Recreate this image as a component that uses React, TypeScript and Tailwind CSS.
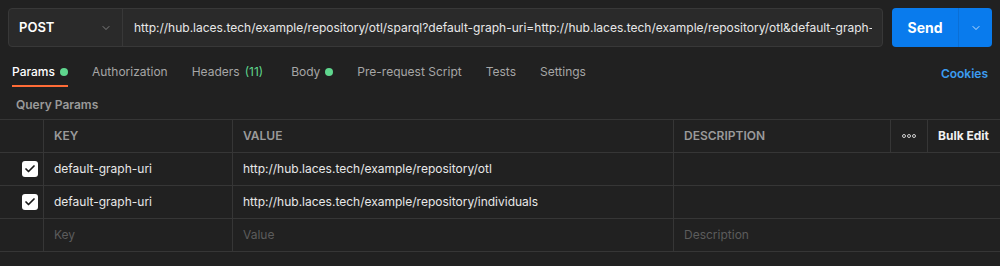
import { Check, ChevronDown } from "lucide-react";

const URL =
  "http://hub.laces.tech/example/repository/otl/sparql?default-graph-uri=http://hub.laces.tech/example/repository/otl&default-graph-uri=http://hub.laces.tech/example/repository/individuals";

const TABS = [
  { label: "Params", dot: true, active: true },
  { label: "Authorization" },
  { label: "Headers", count: "(11)" },
  { label: "Body", dot: true },
  { label: "Pre-request Script" },
  { label: "Tests" },
  { label: "Settings" },
];

const ROWS = [
  { key: "default-graph-uri", value: "http://hub.laces.tech/example/repository/otl" },
  { key: "default-graph-uri", value: "http://hub.laces.tech/example/repository/individuals" },
];

const cell = "h-[33px] border-b border-r border-[#363636] flex items-center";

export default function App() {
  return (
    <div
      className="w-[1000px] h-[266px] bg-[#212121] text-[#e8e8e8] overflow-hidden"
      style={{ fontFamily: "Inter, 'Noto Sans', sans-serif" }}
    >
      {/* request bar */}
      <div className="flex items-center px-2 pt-2">
        <div className="flex h-[39px] w-[875px] rounded-[4px] border border-[#383838] bg-[#2a2a2a]">
          <div className="flex w-[114px] items-center justify-between border-r border-[#383838] pl-[10px] pr-[10px]">
            <span className="text-[13px] font-semibold text-white">POST</span>
            <ChevronDown className="h-[12px] w-[12px] text-[#9a9a9a]" strokeWidth={1.5} />
          </div>
          <div className="flex min-w-0 flex-1 items-center pl-[11px] pr-[10px]">
            <span className="block w-full overflow-hidden whitespace-nowrap text-[12px] text-[#e8e8e8]">{URL}</span>
          </div>
        </div>
        <div className="ml-[9px] flex h-[39px] w-[100px] overflow-hidden rounded-[4px] bg-[#097bed]">
          <div className="flex w-[67px] items-center justify-center border-r border-[#0a6fd6] text-[14px] font-bold text-white">
            Send
          </div>
          <div className="flex flex-1 items-center justify-center">
            <ChevronDown className="h-[12px] w-[12px] text-white" strokeWidth={1.5} />
          </div>
        </div>
      </div>

      {/* tabs */}
      <div className="mt-[14px] flex items-start justify-between pr-3">
        <div className="flex">
          {TABS.map((t) => (
            <div
              key={t.label}
              className={
                "mx-3 flex h-[26px] items-center gap-[5px] border-b-2 pb-[2px] text-[12px] " +
                (t.active ? "border-[#ff6c37] text-white font-medium" : "border-transparent text-[#a6a6a6]") +
                (t.count ? " pr-[4px]" : "")
              }
            >
              <span>{t.label}</span>
              {t.count && <span className="text-[#5fd68e]">{t.count}</span>}
              {t.dot && <span className="h-[8px] w-[8px] rounded-full bg-[#5fd68e]" />}
            </div>
          ))}
        </div>
        <span className="pt-[4px] text-[12px] font-semibold text-[#3c9cf0]">Cookies</span>
      </div>

      <div className="flex h-[32px] items-center pl-4 pt-[3px] text-[12px] font-semibold text-[#9a9a9a]">Query Params</div>

      {/* params table */}
      <div className="grid grid-cols-[44px_189px_441px_217px_37px_1fr] border-t border-[#363636] text-[12px]">
        <div className={cell} />
        <div className={cell + " pl-[10px] font-semibold text-[#9a9a9a]"}>KEY</div>
        <div className={cell + " pl-[10px] font-semibold text-[#9a9a9a]"}>VALUE</div>
        <div className={cell + " pl-[10px] font-semibold text-[#9a9a9a]"}>DESCRIPTION</div>
        <div className={cell + " justify-center gap-[1px]"}>
          <span className="h-[4px] w-[4px] rounded-full border border-[#cfcfcf]" />
          <span className="h-[4px] w-[4px] rounded-full border border-[#cfcfcf]" />
          <span className="h-[4px] w-[4px] rounded-full border border-[#cfcfcf]" />
        </div>
        <div className={cell + " border-r-0 pl-[10px] font-bold text-[#f0f0f0]"}>Bulk Edit</div>

        {ROWS.map((r, i) => (
          <div key={i} className="contents">
            <div className={cell + " justify-end pr-[5px]"}>
              <span className="flex h-[16px] w-[16px] items-center justify-center rounded-[3px] bg-white">
                <Check className="h-[12px] w-[12px] text-[#1a1a1a]" strokeWidth={3.5} />
              </span>
            </div>
            <div className={cell + " pl-[10px] text-[#e8e8e8]"}>{r.key}</div>
            <div className={cell + " pl-[10px] text-[#e8e8e8]"}>{r.value}</div>
            <div className={cell + " col-span-3 border-r-0"} />
          </div>
        ))}

        <div className={cell} />
        <div className={cell + " pl-[10px] text-[#5c5c5c]"}>Key</div>
        <div className={cell + " pl-[10px] text-[#5c5c5c]"}>Value</div>
        <div className={cell + " col-span-3 border-r-0 pl-[10px] text-[#5c5c5c]"}>Description</div>
      </div>
    </div>
  );
}
